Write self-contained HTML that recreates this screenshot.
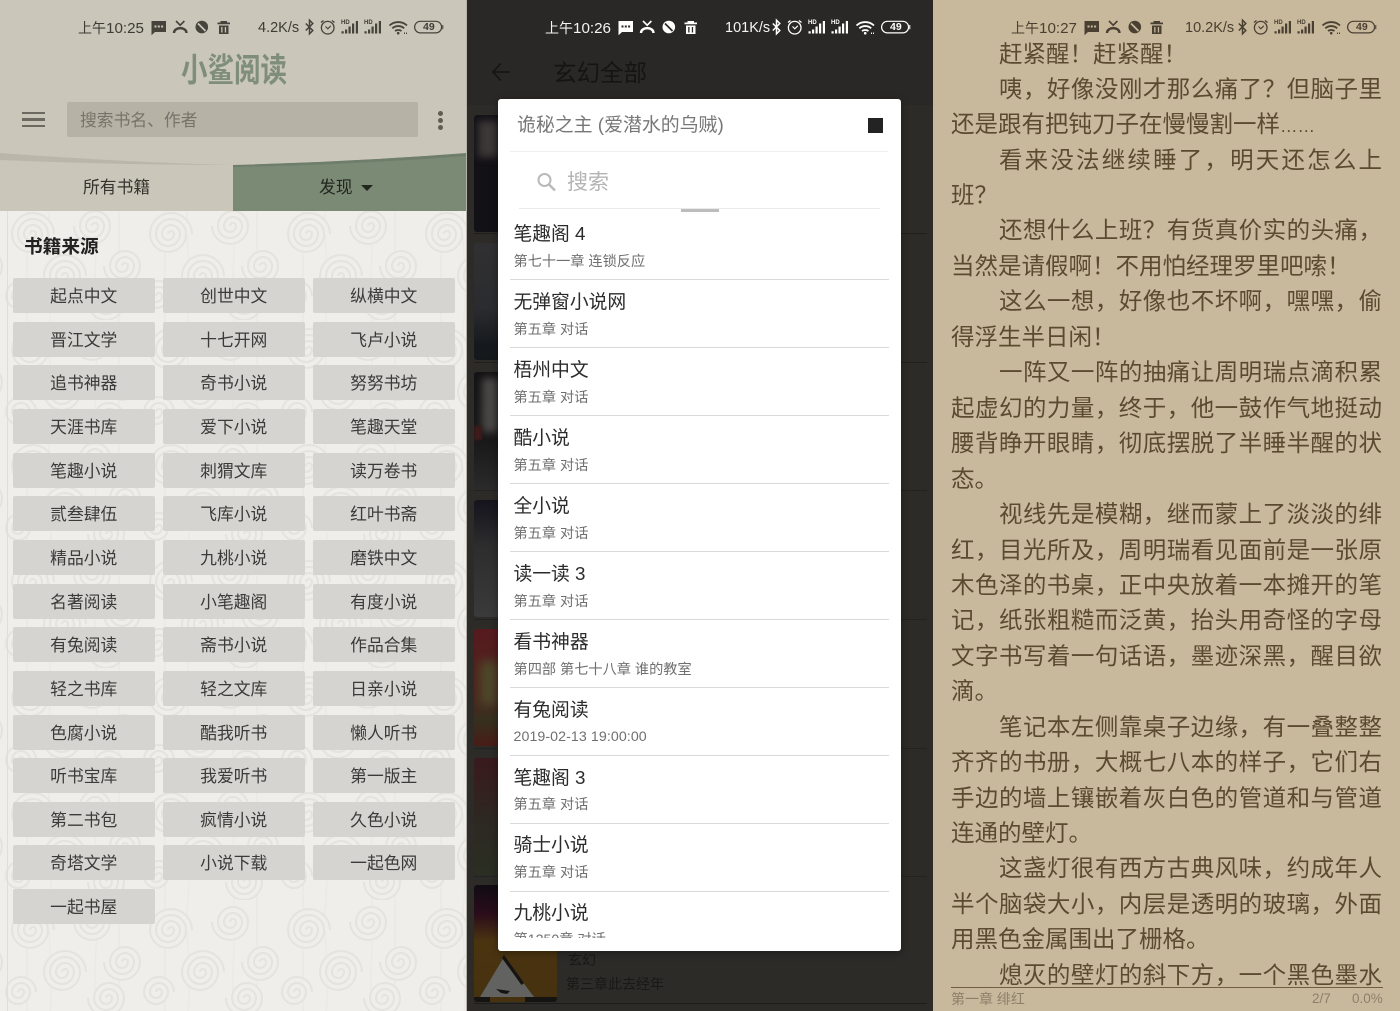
<!DOCTYPE html>
<html lang="zh">
<head>
<meta charset="utf-8">
<title>小鲨阅读</title>
<style>
*{box-sizing:border-box;margin:0;padding:0}
html,body{width:1400px;height:1011px;overflow:hidden;background:#c8b99d}
body{font-family:"Liberation Sans","Noto Sans CJK SC",sans-serif;position:relative}
.t{position:absolute;white-space:nowrap}
.p{position:absolute;top:0;height:1011px;overflow:hidden}
#a{left:0;width:467px;background:#f0eeea;--bg:#cac6b9;color:#3e3c36}
#b{left:467px;width:467px;background:#2d2b28;--bg:#2d2b28;color:#fff}
#c{left:933px;width:467px;background:#c8b99d;--bg:#c8b99d;color:#4a3f30}
.sb{position:absolute;left:0;top:0;width:467px;height:54px}
.stime{position:absolute;top:18px;font-size:15.2px;line-height:20px;white-space:nowrap}
.stime b{font-weight:normal;font-size:14px}
.hd{position:absolute;top:20px;font-size:6px;line-height:6px;font-weight:bold}
.bn{position:absolute;top:21.500px;font-size:10.500px;line-height:11px;font-weight:bold}
.btn{position:absolute;height:35px;width:141.5px;background:#d5d4d1;border-radius:2px;text-align:center;font-size:16.8px;line-height:37px;color:#3b3a38}
.row{position:absolute;left:15.5px;white-space:nowrap}
.ti{font-size:18.8px;line-height:24px;color:#2b2b2b}
.su{font-size:14.2px;line-height:18px;color:#6f6f6f}
.dv{position:absolute;left:12px;width:379px;height:1px;background:#d9d9d9}
.cv{position:absolute;left:474px;width:83px;height:117px;border-radius:3px;overflow:hidden}
.rd{position:absolute;left:951px;width:431px;height:36px;font-size:23.5px;line-height:36px;color:#5c4a30;white-space:nowrap;overflow:visible}
.j{white-space:normal;text-align:justify;text-align-last:justify}
.i{left:999px;width:383px}
</style>
</head>
<body>

<svg width="0" height="0" style="position:absolute">
<symbol id="s1" viewBox="0 0 467 54">
  <path fill="currentColor" fill-rule="evenodd" d="M151.5 21h14.5v11h-11l-3.500 3.200zM154.500 25.500v2h2v-2zM157.800 25.500v2h2v-2zM161.100 25.500v2h2v-2z"/>
  <path fill="none" stroke="currentColor" stroke-width="2.400" d="M174 33c0-6.500 12.500-6.500 12.500 0"/>
  <path fill="none" stroke="currentColor" stroke-width="1.600" d="M176 21l4.200 4.200 4.200-4.200"/>
  <circle cx="201.800" cy="27" r="6.300" fill="currentColor"/>
  <path stroke="var(--bg)" stroke-width="1.800" d="M198 23.500l7.500 7.500"/>
  <path fill="currentColor" fill-rule="evenodd" d="M217.500 22.500h3v-1.500h6.500v1.500h3v1.800h-12.500zM219 25.500h9.500v8.500h-9.500zM221.200 27v5.500h1.300v-5.500zM224.800 27v5.500h1.300v-5.500z"/>
  <path fill="none" stroke="currentColor" stroke-width="1.500" d="M305.800 23.500l7 7-3.300 3.300v-13.600l3.300 3.300-7 7"/>
  <path fill="none" stroke="currentColor" stroke-width="1.300" d="M321 22.500l2.500-2M334.500 22.500l-2.500-2"/>
  <circle cx="327.700" cy="27.700" r="6.300" fill="none" stroke="currentColor" stroke-width="1.300"/>
  <path fill="none" stroke="currentColor" stroke-width="1.100" d="M325.500 26.500l2.300 2.300 3-3"/>
  <path fill="currentColor" d="M341.500 31.200h2.200v2.300h-2.200zM345 29.500h2.200v4h-2.200zM348.500 26.500h2.200v7h-2.200zM352 23.500h2.200v10h-2.200zM355.800 21h2.200v12.500h-2.200z"/>
  <path fill="currentColor" d="M364.500 31.200h2.200v2.300h-2.200zM368 29.500h2.200v4h-2.200zM371.500 26.500h2.200v7h-2.200zM375 23.500h2.200v10h-2.200zM378.800 21h2.200v12.500h-2.200z"/>
  <g fill="none" stroke="currentColor" stroke-width="1.800">
    <path d="M389.500 25.500c5-4.600 12.500-4.600 17.500 0"/>
    <path d="M392.300 28.300c3.500-3 8.400-3 11.900 0"/>
    <path d="M395 31c1.800-1.300 4.700-1.300 6.500 0"/>
  </g>
  <circle cx="398.200" cy="33.200" r="1.300" fill="currentColor"/>
  <path fill="currentColor" d="M404 32.500h1v1.500h-1zM406 32.500h1v1.500h-1z"/>
  <rect x="414.600" y="21.300" width="27" height="11.600" rx="5.800" fill="none" stroke="currentColor" stroke-width="1.200"/>
  <path fill="currentColor" d="M442.300 25h1v4.200h-1z"/>
</symbol>
</svg>

<!-- PANEL A -->
<div class="p" id="a">
  <svg style="position:absolute;left:0;top:210px" width="467" height="801">
    <defs>
      <pattern id="cloud" width="138" height="116" patternUnits="userSpaceOnUse" x="4" y="-6">
        <g fill="none" stroke="#ebe9e5" stroke-width="1.500">
          <path d="M46 0C42 30 50 60 46 116M92 0C96 30 88 60 92 116M23 0V116M115 0V116"/>
        </g>
        <g fill="#f0eeea" stroke="#e5e3de" stroke-width="2">
          <path d="M26 30a3 3 0 0 1 6 0a6 6 0 0 1-12 0a9 9 0 0 1 18 0a12 12 0 0 1-24 0a15 15 0 0 1 30 0a18 18 0 0 1-36 0a21 21 0 0 1 42 0"/>
          <path d="M88 22a3 3 0 0 1 6 0a6 6 0 0 1-12 0a9 9 0 0 1 18 0a12 12 0 0 1-24 0a15 15 0 0 1 30 0a18 18 0 0 1-36 0"/>
          <path d="M118 62a3 3 0 0 1 6 0a6 6 0 0 1-12 0a9 9 0 0 1 18 0a12 12 0 0 1-24 0a15 15 0 0 1 30 0a18 18 0 0 1-36 0"/>
          <path d="M58 72a3 3 0 0 1 6 0a6 6 0 0 1-12 0a9 9 0 0 1 18 0a12 12 0 0 1-24 0a15 15 0 0 1 30 0a18 18 0 0 1-36 0a21 21 0 0 1 42 0"/>
          <path d="M14 92a3 3 0 0 1 6 0a6 6 0 0 1-12 0a9 9 0 0 1 18 0a12 12 0 0 1-24 0a15 15 0 0 1 30 0"/>
          <path d="M102 98a3 3 0 0 1 6 0a6 6 0 0 1-12 0a9 9 0 0 1 18 0a12 12 0 0 1-24 0a15 15 0 0 1 30 0a18 18 0 0 1-36 0"/>
        </g>
      </pattern>
    </defs>
    <rect width="467" height="801" fill="url(#cloud)"/>
  </svg>
  <div style="position:absolute;left:7px;top:211px;width:1px;height:800px;background:#e0ded9"></div>
  <div style="position:absolute;left:0;top:0;width:467px;height:211px;background:#cac6b9"></div>
  <svg style="position:absolute;left:0;top:150px" width="467" height="62">
    <path d="M233 15Q350 12 467 3V61H233z" fill="#7a8a75"/>
    <path d="M0 3Q120 12 233 15Q350 12 467 3V-5H0z" fill="#cac6b9"/>
    <path d="M0 3Q120 12 233 15Q120 15 0 10z" fill="#bab6aa"/>
    <path d="M233 15Q350 12 467 3V6Q350 15 233 17z" fill="#6f7e6a"/>
  </svg>
  <svg class="sb" style="color:#45433c"><use href="#s1"/></svg>
  <div class="stime" style="left:78px;color:#3e3c36"><b>上午</b>10:25</div>
  <div class="stime" style="left:258px;color:#3e3c36;font-size:14.500px">4.2K/s</div>
  <div class="hd" style="left:341px">HD</div><div class="hd" style="left:364px">HD</div>
  <div class="bn" style="left:423px">49</div>

  <div class="t" style="left:181px;top:50px;width:106px;text-align:center;font-size:26.500px;line-height:40px;font-weight:bold;color:#7f8e7a;transform:scaleY(1.25)">小鲨阅读</div>

  <div style="position:absolute;left:22px;top:111.500px;width:23px;height:2.500px;background:#6c6a60"></div>
  <div style="position:absolute;left:22px;top:118px;width:23px;height:2.500px;background:#6c6a60"></div>
  <div style="position:absolute;left:22px;top:124.500px;width:23px;height:2.500px;background:#6c6a60"></div>
  <div style="position:absolute;left:67px;top:102px;width:351px;height:35px;background:#b6b2a5;border-radius:2px"></div>
  <div class="t" style="left:80px;top:108px;font-size:16.800px;line-height:25px;color:#76736a">搜索书名、作者</div>
  <div style="position:absolute;left:437.500px;top:110.500px;width:5px;height:5px;border-radius:50%;background:#5f5d54"></div>
  <div style="position:absolute;left:437.500px;top:117.500px;width:5px;height:5px;border-radius:50%;background:#5f5d54"></div>
  <div style="position:absolute;left:437.500px;top:125px;width:5px;height:5px;border-radius:50%;background:#5f5d54"></div>

  <div class="t" style="left:83px;top:176px;font-size:16.800px;line-height:24px;color:#35332e">所有书籍</div>
  <div class="t" style="left:319px;top:176px;font-size:16.800px;line-height:24px;color:#23261f">发现</div>
  <div style="position:absolute;left:361px;top:184.500px;width:0;height:0;border-left:6px solid transparent;border-right:6px solid transparent;border-top:6px solid #23261f"></div>

  <div class="t" style="left:24px;top:234px;font-size:18.700px;line-height:26px;font-weight:bold;color:#222">书籍来源</div>

  <div class="btn" style="left:13px;top:278px">起点中文</div><div class="btn" style="left:163px;top:278px">创世中文</div><div class="btn" style="left:313px;top:278px">纵横中文</div>
  <div class="btn" style="left:13px;top:322px">晋江文学</div><div class="btn" style="left:163px;top:322px">十七开网</div><div class="btn" style="left:313px;top:322px">飞卢小说</div>
  <div class="btn" style="left:13px;top:365px">追书神器</div><div class="btn" style="left:163px;top:365px">奇书小说</div><div class="btn" style="left:313px;top:365px">努努书坊</div>
  <div class="btn" style="left:13px;top:409px">天涯书库</div><div class="btn" style="left:163px;top:409px">爱下小说</div><div class="btn" style="left:313px;top:409px">笔趣天堂</div>
  <div class="btn" style="left:13px;top:453px">笔趣小说</div><div class="btn" style="left:163px;top:453px">刺猬文库</div><div class="btn" style="left:313px;top:453px">读万卷书</div>
  <div class="btn" style="left:13px;top:496px">贰叁肆伍</div><div class="btn" style="left:163px;top:496px">飞库小说</div><div class="btn" style="left:313px;top:496px">红叶书斋</div>
  <div class="btn" style="left:13px;top:540px">精品小说</div><div class="btn" style="left:163px;top:540px">九桃小说</div><div class="btn" style="left:313px;top:540px">磨铁中文</div>
  <div class="btn" style="left:13px;top:584px">名著阅读</div><div class="btn" style="left:163px;top:584px">小笔趣阁</div><div class="btn" style="left:313px;top:584px">有度小说</div>
  <div class="btn" style="left:13px;top:627px">有兔阅读</div><div class="btn" style="left:163px;top:627px">斋书小说</div><div class="btn" style="left:313px;top:627px">作品合集</div>
  <div class="btn" style="left:13px;top:671px">轻之书库</div><div class="btn" style="left:163px;top:671px">轻之文库</div><div class="btn" style="left:313px;top:671px">日亲小说</div>
  <div class="btn" style="left:13px;top:715px">色腐小说</div><div class="btn" style="left:163px;top:715px">酷我听书</div><div class="btn" style="left:313px;top:715px">懒人听书</div>
  <div class="btn" style="left:13px;top:758px">听书宝库</div><div class="btn" style="left:163px;top:758px">我爱听书</div><div class="btn" style="left:313px;top:758px">第一版主</div>
  <div class="btn" style="left:13px;top:802px">第二书包</div><div class="btn" style="left:163px;top:802px">疯情小说</div><div class="btn" style="left:313px;top:802px">久色小说</div>
  <div class="btn" style="left:13px;top:845px">奇塔文学</div><div class="btn" style="left:163px;top:845px">小说下载</div><div class="btn" style="left:313px;top:845px">一起色网</div>
  <div class="btn" style="left:13px;top:889px">一起书屋</div>
  <div style="position:absolute;left:466px;top:0;width:1px;height:1011px;background:#b5b3ab"></div>
</div>

<!-- PANEL B -->
<div class="p" id="b">
  <div style="position:absolute;left:0;top:0;width:467px;height:105px;background:#2a2826"></div>
  <svg class="sb" style="color:#fff"><use href="#s1"/></svg>
  <div class="stime" style="left:78px;color:#f4f4f4"><b>上午</b>10:26</div>
  <div class="stime" style="left:258px;color:#f4f4f4;font-size:14.500px">101K/s</div>
  <div class="hd" style="left:341px">HD</div><div class="hd" style="left:364px">HD</div>
  <div class="bn" style="left:423px">49</div>

  <svg style="position:absolute;left:24px;top:62px" width="20" height="20"><path d="M18.500 10H2M10 1.500L1.800 10l8.200 8.500" fill="none" stroke="#171614" stroke-width="1.800"/></svg>
  <div class="t" style="left:86px;top:56px;font-size:23.500px;line-height:34px;color:#151412">玄幻全部</div>

  <div style="position:absolute;left:7px;top:233px;width:453px;height:1px;background:#211f1d"></div>
  <div style="position:absolute;left:7px;top:362px;width:453px;height:1px;background:#211f1d"></div>
  <div style="position:absolute;left:7px;top:490px;width:453px;height:1px;background:#242220"></div>
  <div style="position:absolute;left:7px;top:619px;width:453px;height:1px;background:#242220"></div>
  <div style="position:absolute;left:7px;top:748px;width:453px;height:1px;background:#242220"></div>
  <div style="position:absolute;left:7px;top:876px;width:453px;height:1px;background:#242220"></div>
  <div style="position:absolute;left:7px;top:1003px;width:453px;height:1px;background:#1d1c1a"></div>

  <div class="t" style="left:101px;top:949px;font-size:14px;line-height:22px;color:#191816">玄幻</div>
  <div class="t" style="left:99px;top:973px;font-size:14px;line-height:22px;color:#191816">第三章此去经年</div>
</div>

<!-- covers -->
<div class="cv" style="top:115px;background:#121116"><div style="position:absolute;left:4px;top:6px;width:20px;height:36px;background:#3c3837;filter:blur(4px)"></div></div>
<div class="cv" style="top:243px;background:linear-gradient(180deg,#303032 0%,#2b2c2f 55%,#15191d 88%,#15181b 100%)"></div>
<div class="cv" style="top:372px;background:linear-gradient(180deg,#131214 0%,#1a191a 60%,#2b2a2b 100%)"><div style="position:absolute;left:8px;top:6px;width:16px;height:54px;background:#4a4846;filter:blur(4px)"></div><div style="position:absolute;left:0;top:54px;width:8px;height:14px;background:#3e1a1a;filter:blur(1px)"></div></div>
<div class="cv" style="top:500px;background:linear-gradient(180deg,#15131c 0%,#2d2d2e 40%,#3a3a3b 100%)"></div>
<div class="cv" style="top:629px;background:linear-gradient(180deg,#571a1e 0%,#4c241d 55%,#36301f 78%,#491c16 100%)"><div style="position:absolute;left:6px;top:32px;width:18px;height:44px;background:#4d482a;filter:blur(5px)"></div></div>
<div class="cv" style="top:758px;background:linear-gradient(180deg,#3a191d 0%,#2c2a22 60%,#2b2e22 100%)"></div>
<div class="cv" style="top:885px;background:linear-gradient(180deg,#100b14 0%,#2a0d1a 25%,#4a3410 48%,#463110 100%)">
  <svg style="position:absolute;left:0;top:0" width="83" height="117">
    <path d="M6 112L30 72L60 112z" fill="#626260"/>
    <path d="M30 70L50 98L47.500 100L28 73z" fill="#161412"/>
    <path d="M22 104l14 2-3 3-6-1z" fill="#151412"/>
    <path d="M0 112h16v5H0zM51 112h32v5H51z" fill="#161412"/>
  </svg>
</div>

<!-- dialog -->
<div style="position:absolute;left:498px;top:99px;width:403px;height:852px;background:#fff;border-radius:3px;box-shadow:0 2px 8px rgba(0,0,0,.35);overflow:hidden;color:#333">
  <div class="t" style="left:19px;top:13px;font-size:18.900px;line-height:28px;color:#777">诡秘之主 (爱潜水的乌贼)</div>
  <div style="position:absolute;left:370px;top:19px;width:14.500px;height:14.500px;background:#232323"></div>
  <div style="position:absolute;left:12px;top:52px;width:378px;height:1px;background:#f0f0f0"></div>
  <svg style="position:absolute;left:38px;top:72px" width="22" height="22"><circle cx="8.500" cy="9" r="6" fill="none" stroke="#b9b9b9" stroke-width="2"/><path d="M13 13.500l6 6" stroke="#b9b9b9" stroke-width="2.400"/></svg>
  <div class="t" style="left:69px;top:69px;font-size:21px;line-height:30px;color:#b4b4b4">搜索</div>
  <div style="position:absolute;left:21px;top:108.500px;width:361px;height:1px;background:#eaeaea"></div>
  <div style="position:absolute;left:183px;top:110px;width:38px;height:3px;background:#bdbdbd"></div>

  <div style="position:absolute;left:0;top:114px;width:403px;height:725px;overflow:hidden">
    <div class="row ti" style="top:9px">笔趣阁 4</div><div class="row su" style="top:40px">第七十一章 连锁反应</div><div class="dv" style="top:66px"></div>
    <div class="row ti" style="top:77px">无弹窗小说网</div><div class="row su" style="top:108px">第五章 对话</div><div class="dv" style="top:134px"></div>
    <div class="row ti" style="top:145px">梧州中文</div><div class="row su" style="top:176px">第五章 对话</div><div class="dv" style="top:202px"></div>
    <div class="row ti" style="top:213px">酷小说</div><div class="row su" style="top:244px">第五章 对话</div><div class="dv" style="top:270px"></div>
    <div class="row ti" style="top:281px">全小说</div><div class="row su" style="top:312px">第五章 对话</div><div class="dv" style="top:338px"></div>
    <div class="row ti" style="top:349px">读一读 3</div><div class="row su" style="top:380px">第五章 对话</div><div class="dv" style="top:406px"></div>
    <div class="row ti" style="top:417px">看书神器</div><div class="row su" style="top:448px">第四部 第七十八章 谁的教室</div><div class="dv" style="top:474px"></div>
    <div class="row ti" style="top:485px">有兔阅读</div><div class="row su" style="top:515px;letter-spacing:.08px">2019-02-13 19:00:00</div><div class="dv" style="top:542px"></div>
    <div class="row ti" style="top:553px">笔趣阁 3</div><div class="row su" style="top:583px">第五章 对话</div><div class="dv" style="top:610px"></div>
    <div class="row ti" style="top:620px">骑士小说</div><div class="row su" style="top:651px">第五章 对话</div><div class="dv" style="top:678px"></div>
    <div class="row ti" style="top:688px">九桃小说</div><div class="row su" style="top:718px">第1250章 对话</div>
  </div>
</div>

<!-- PANEL C -->
<div class="p" id="c">
  <svg class="sb" style="color:#4a4032"><use href="#s1"/></svg>
  <div class="stime" style="left:78px;color:#4a3f30"><b>上午</b>10:27</div>
  <div class="stime" style="left:252px;color:#4a3f30;font-size:14.500px">10.2K/s</div>
  <div class="hd" style="left:341px">HD</div><div class="hd" style="left:364px">HD</div>
  <div class="bn" style="left:423px">49</div>
</div>

<div class="rd i" style="top:36px;width:auto">赶紧醒！赶紧醒！</div>
<div class="rd i j" style="top:71px">咦，好像没刚才那么痛了？但脑子里</div>
<div class="rd" style="top:106px;width:auto">还是跟有把钝刀子在慢慢割一样<span style="font-size:17.500px">……</span></div>
<div class="rd i j" style="top:142px">看来没法继续睡了，明天还怎么上</div>
<div class="rd" style="top:177px;width:auto">班？</div>
<div class="rd i j" style="top:212px">还想什么上班？有货真价实的头痛，</div>
<div class="rd" style="top:248px;width:auto">当然是请假啊！不用怕经理罗里吧嗦！</div>
<div class="rd i j" style="top:283px">这么一想，好像也不坏啊，嘿嘿，偷</div>
<div class="rd" style="top:319px;width:auto">得浮生半日闲！</div>
<div class="rd i j" style="top:354px">一阵又一阵的抽痛让周明瑞点滴积累</div>
<div class="rd j" style="top:390px">起虚幻的力量，终于，他一鼓作气地挺动</div>
<div class="rd j" style="top:425px">腰背睁开眼睛，彻底摆脱了半睡半醒的状</div>
<div class="rd" style="top:461px;width:auto">态。</div>
<div class="rd i j" style="top:496px">视线先是模糊，继而蒙上了淡淡的绯</div>
<div class="rd j" style="top:532px">红，目光所及，周明瑞看见面前是一张原</div>
<div class="rd j" style="top:567px">木色泽的书桌，正中央放着一本摊开的笔</div>
<div class="rd j" style="top:602px">记，纸张粗糙而泛黄，抬头用奇怪的字母</div>
<div class="rd j" style="top:638px">文字书写着一句话语，墨迹深黑，醒目欲</div>
<div class="rd" style="top:673px;width:auto">滴。</div>
<div class="rd i j" style="top:709px">笔记本左侧靠桌子边缘，有一叠整整</div>
<div class="rd j" style="top:744px">齐齐的书册，大概七八本的样子，它们右</div>
<div class="rd j" style="top:780px">手边的墙上镶嵌着灰白色的管道和与管道</div>
<div class="rd" style="top:815px;width:auto">连通的壁灯。</div>
<div class="rd i j" style="top:850px">这盏灯很有西方古典风味，约成年人</div>
<div class="rd j" style="top:886px">半个脑袋大小，内层是透明的玻璃，外面</div>
<div class="rd" style="top:921px;width:auto">用黑色金属围出了栅格。</div>
<div class="rd i j" style="top:957px">熄灭的壁灯的斜下方，一个黑色墨水</div>

<div style="position:absolute;left:951px;top:987px;width:432px;height:1px;background:#715d3f"></div>
<div class="t" style="left:951px;top:990px;font-size:14px;line-height:18px;color:#8d8069">第一章 绯红</div>
<div class="t" style="left:1312px;top:990px;font-size:13.500px;line-height:18px;color:#8d8069">2/7</div>
<div class="t" style="left:1352px;top:990px;font-size:13.500px;line-height:18px;color:#8d8069">0.0%</div>

</body>
</html>
